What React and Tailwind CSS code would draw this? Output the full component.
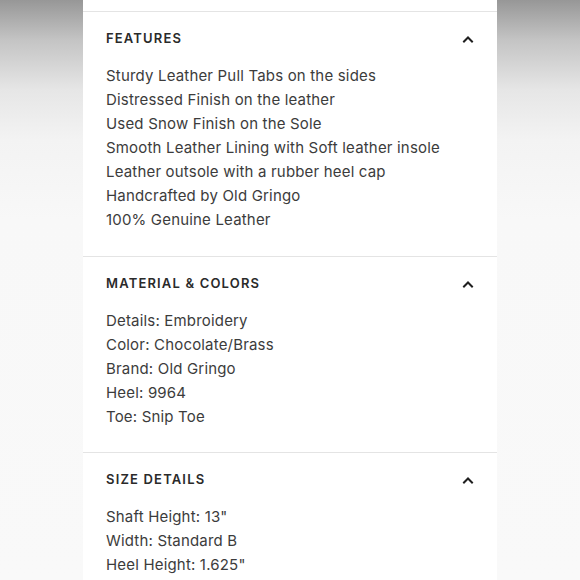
import React from "react";

const sections = [
  {
    title: "FEATURES",
    items: [
      "Sturdy Leather Pull Tabs on the sides",
      "Distressed Finish on the leather",
      "Used Snow Finish on the Sole",
      "Smooth Leather Lining with Soft leather insole",
      "Leather outsole with a rubber heel cap",
      "Handcrafted by Old Gringo",
      "100% Genuine Leather",
    ],
    pb: "pb-[24px]",
  },
  {
    title: "MATERIAL & COLORS",
    items: [
      "Details: Embroidery",
      "Color: Chocolate/Brass",
      "Brand: Old Gringo",
      "Heel: 9964",
      "Toe: Snip Toe",
    ],
    pb: "pb-[23px]",
  },
  {
    title: "SIZE DETAILS",
    items: ['Shaft Height: 13"', "Width: Standard B", 'Heel Height: 1.625"'],
    pb: "pb-[23px]",
  },
];

function Chevron() {
  return (
    <svg width="12" height="8" viewBox="0 0 12 8" fill="none">
      <path d="M2 6.5 L6 2.5 L10 6.5" stroke="#1f1f1f" strokeWidth="2" strokeLinecap="square" />
    </svg>
  );
}

export default function App() {
  return (
    <div
      className="w-[580px] h-[580px] overflow-hidden flex justify-center bg-[linear-gradient(180deg,#979797_0px,#c4c4c4_40px,#e6e6e6_90px,#f3f3f3_140px,#f8f8f8_220px,#f9f9f9_100%)]"
      style={{ fontFamily: "Inter, 'DejaVu Sans', sans-serif" }}
    >
      <div className="w-[414px] h-full bg-white pt-[11px]">
        {sections.map((s) => (
          <section key={s.title} className={`border-t border-[#e4e4e4] px-[23px] pt-[17px] ${s.pb}`}>
            <div className="h-[20px] flex items-center justify-between">
              <h2 className="text-[13px] font-semibold tracking-[0.09em] text-[#2a2a2a]">{s.title}</h2>
              <Chevron />
            </div>
            <ul className="mt-[15px]">
              {s.items.map((it) => (
                <li key={it} className="h-[24px] leading-[24px] text-[15px] tracking-[0.012em] text-[#3c3c3c]">
                  {it}
                </li>
              ))}
            </ul>
          </section>
        ))}
      </div>
    </div>
  );
}
